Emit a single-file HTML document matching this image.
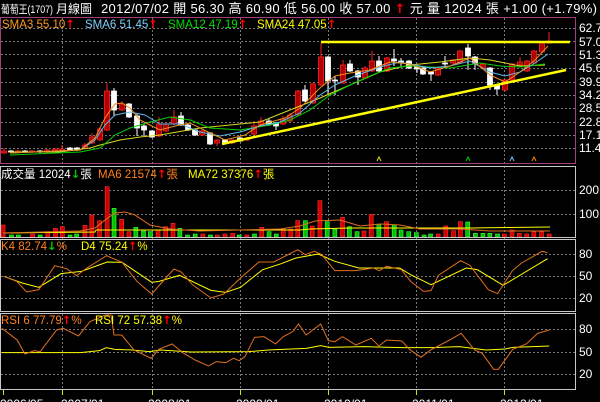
<!DOCTYPE html>
<html><head><meta charset="utf-8"><style>
html,body{margin:0;padding:0;background:#000;width:600px;height:402px;overflow:hidden}
svg{display:block}
text{font-family:"Liberation Sans","Noto Sans CJK TC",sans-serif}
.a{font-family:"DejaVu Sans",sans-serif;font-weight:bold}
</style></head><body>
<svg id="s" width="600" height="402" viewBox="0 0 600 402" xmlns="http://www.w3.org/2000/svg">
<rect width="600" height="402" fill="#000"/>
<g id="grid" stroke="#777" stroke-width="1" stroke-dasharray="2,2"></g>
<g id="draw"></g>
<rect x="0.5" y="17.5" width="575" height="146" fill="none" stroke="#a0407a" stroke-width="1"/>
<rect x="0.5" y="166.5" width="575" height="71" fill="none" stroke="#c8c8c8" stroke-width="1"/>
<rect x="0.5" y="239.5" width="575" height="72" fill="none" stroke="#c8c8c8" stroke-width="1"/>
<rect x="0.5" y="313.5" width="575" height="76" fill="none" stroke="#c8c8c8" stroke-width="1"/>
<text x="1" y="13" font-size="11" fill="#fff" textLength="52" lengthAdjust="spacingAndGlyphs">葡萄王(1707)</text>
<text x="56" y="13" font-size="12" fill="#fff">月線圖</text>
<text x="101" y="13" font-size="13" fill="#fff" textLength="496" lengthAdjust="spacing">2012/07/02 開 56.30 高 60.90 低 56.00 收 57.00 <tspan fill="#f00" class="a">↑</tspan> 元 量 12024 張 +1.00 (+1.79%)</text>
<g font-size="11.5">
<text x="2" y="28" fill="#ff9a1e">SMA3 55.10<tspan fill="#f00" class="a">↑</tspan></text>
<text x="85" y="28" fill="#7fd0ff">SMA6 51.45<tspan fill="#f00" class="a">↑</tspan></text>
<text x="168" y="28" fill="#00e000">SMA12 47.19<tspan fill="#f00" class="a">↑</tspan></text>
<text x="257" y="28" fill="#ffff00">SMA24 47.05<tspan fill="#f00" class="a">↑</tspan></text>
<text x="1" y="178" fill="#fff">成交量 12024<tspan fill="#0c0" class="a">↓</tspan>張</text>
<text x="98" y="178" fill="#ff8020">MA6 21574<tspan fill="#f00" class="a">↑</tspan>張</text>
<text x="188" y="178" fill="#ffff00">MA72 37376<tspan fill="#f00" class="a">↑</tspan>張</text>
<text x="1" y="250" fill="#ff8020">K4 82.74<tspan fill="#0c0" class="a">↓</tspan>%</text>
<text x="81" y="250" fill="#ffff00">D4 75.24<tspan fill="#f00" class="a">↑</tspan>%</text>
<text x="1" y="324" fill="#ff8020">RSI 6 77.79<tspan fill="#f00" class="a">↑</tspan>%</text>
<text x="95" y="324" fill="#ffff00">RSI 72 57.38<tspan fill="#f00" class="a">↑</tspan>%</text>
</g>
<g font-size="12" fill="#fff">
<text x="579" y="32">62.7</text><text x="579" y="46">57.0</text><text x="579" y="59">51.3</text>
<text x="579" y="72">45.6</text><text x="579" y="86">39.9</text><text x="579" y="99">34.2</text>
<text x="579" y="112">28.5</text><text x="579" y="126">22.8</text><text x="579" y="139">17.1</text>
<text x="579" y="152">11.4</text>
<text x="579" y="194">200K</text><text x="579" y="218">100K</text>
<text x="579" y="258">80</text><text x="579" y="280">50</text><text x="579" y="302">20</text>
<text x="579" y="333">80</text><text x="579" y="356">50</text><text x="579" y="378">20</text>
<text x="0" y="408">2006/05</text><text x="61" y="408">2007/01</text><text x="148" y="408">2008/01</text>
<text x="236" y="408">2009/01</text><text x="324" y="408">2010/01</text><text x="412" y="408">2011/01</text>
<text x="500" y="408">2012/01</text>
</g>
</svg>
<script>
var NS="http://www.w3.org/2000/svg";
function el(p,t,a){var e=document.createElementNS(NS,t);for(var k in a)e.setAttribute(k,a[k]);p.appendChild(e);return e;}
var G=document.getElementById('grid'),D=document.getElementById('draw');
[62,152,240,328,416,504].forEach(function(x){el(G,'line',{x1:x+.5,y1:18,x2:x+.5,y2:390});});
[28,41,54,68,82,95,108,122,135,148,190,214,254,276,298,329,352,374].forEach(function(y){el(G,'line',{x1:1,y1:y+.5,x2:575,y2:y+.5});});
[3,62,152,240,328,416,504].forEach(function(x){el(D,'line',{x1:x+.5,y1:390,x2:x+.5,y2:395,stroke:'#dd0',"stroke-width":1});});
function pl(pts,c,w){el(D,'polyline',{points:pts.map(function(p){return p[0]+','+p[1]}).join(' '),fill:'none',stroke:c,'stroke-width':w||1});}
var vb=[[8,195,'r'],[30,225,'g'],[48,225,'g'],[85,222,'r'],[105,225,'g'],[125,215,'r'],[145,205,'r'],[163,200,'r'],[183,225,'g'],[200,222,'g'],[222,196,'r'],[240,165,'r'],[260,182,'r'],[280,80,'r'],[298,145,'g'],[318,178,'r'],[337,215,'r'],[355,202,'g'],[375,213,'g'],[393,215,'g'],[413,210,'r'],[433,200,'r'],[452,190,'r'],[470,205,'g'],[490,225,'g'],[510,222,'g'],[530,222,'r'],[550,225,'g'],[568,225,'r'],[588,222,'r'],[608,220,'r'],[625,225,'g'],[645,225,'r'],[665,222,'g'],[684,202,'r'],[703,215,'g'],[722,222,'g'],[740,207,'r'],[760,207,'r'],[778,182,'r'],[798,182,'g'],[816,198,'r'],[836,122,'r'],[855,185,'g'],[875,208,'g'],[895,172,'r'],[913,200,'g'],[933,215,'g'],[951,213,'r'],[970,163,'r'],[990,193,'g'],[1010,185,'r'],[1030,195,'g'],[1048,210,'g'],[1068,215,'g'],[1088,218,'g'],[1108,225,'g'],[1125,222,'g'],[1145,222,'r'],[1165,198,'r'],[1185,212,'r'],[1203,185,'r'],[1222,186,'g'],[1242,220,'g'],[1262,220,'g'],[1280,220,'g'],[1300,222,'g'],[1318,222,'r'],[1338,210,'r'],[1357,220,'r'],[1376,222,'r'],[1395,215,'r'],[1415,215,'r'],[1435,222,'r']];
vb.forEach(function(b){var x=b[0]/2.613,y=160+b[1]/3;el(D,'rect',{x:x-2,y:y,width:4,height:237-y,fill:b[2]=='r'?'#d00000':'#00c000',stroke:b[2]=='r'?'#ff3030':'#40ff40','stroke-width':.6});});
pl([[3,233],[95,232],[96,230],[300,230],[310,229],[350,228],[355,228],[470,228],[550,227]],'#ffff00',1);
pl([[3,233],[80,231],[95,228],[105,220],[115,213],[125,212],[135,215],[150,225],[170,229],[200,231],[240,230],[280,229],[300,226],[315,221],[340,220],[360,226],[380,224],[400,225],[420,229],[460,229],[490,231],[520,231],[550,231]],'#e07020',1);
var cd=[[4,151,153,148,154,'r'],[11,151,152,150,153,'w'],[18,151,152,150,153,'r'],[25,151,152,150,153,'w'],[32,151,152,150,153,'r'],[40,151,152,150,153,'w'],[47,150,152,149,153,'r'],[55,149,151,148,152,'r'],[62,149,151,145,152,'r'],[70,148,150,147,151,'w'],[77,148,150,147,151,'w'],[85,145,148,143,149,'r'],[92,137,143,133,144,'r'],[100,129,140,127,141,'r'],[107,91,130,83,131,'r'],[114,91,110,88,116,'w'],[122,104,110,101,111,'r'],[129,104,117,103,118,'w'],[137,116,128,114,136,'w'],[144,126,130,124,136,'w'],[152,131,137,130,138,'w'],[159,124,136,117,137,'r'],[166,124,131,122,132,'r'],[174,117,124,110,125,'r'],[181,116,125,112,126,'w'],[188,125,130,124,131,'w'],[195,130,135,129,136,'w'],[202,131,135,130,136,'r'],[210,133,144,132,145,'w'],[217,140,143,139,146,'r'],[225,140,143,139,144,'w'],[232,140,143,139,144,'r'],[240,138,141,137,142,'w'],[247,138,140,137,141,'r'],[254,126,134,121,135,'r'],[261,121,125,117,126,'r'],[269,121,124,119,126,'w'],[276,123,126,122,130,'w'],[283,119,124,116,125,'r'],[290,115,121,113,122,'r'],[298,91,115,90,116,'r'],[305,90,101,85,102,'w'],[313,84,103,83,104,'r'],[321,57,85,43,86,'r'],[328,57,81,56,95,'w'],[335,80,81,76,95,'w'],[343,65,83,60,84,'r'],[350,64,71,60,72,'w'],[358,71,77,70,85,'w'],[365,68,78,66,79,'r'],[372,61,71,51,72,'r'],[379,61,71,56,72,'w'],[387,58,71,57,72,'r'],[394,59,61,49,66,'w'],[401,61,63,58,67,'w'],[409,61,68,60,69,'w'],[417,67,69,66,73,'w'],[423,68,74,67,75,'w'],[431,72,74,71,81,'w'],[438,68,75,67,76,'r'],[445,63,64,56,68,'w'],[453,60,63,59,64,'r'],[460,51,63,50,64,'r'],[468,48,56,44,70,'w'],[475,57,63,56,70,'w'],[483,64,68,63,69,'r'],[490,68,85,67,90,'w'],[497,85,89,84,95,'w'],[505,80,90,79,91,'r'],[512,64,80,63,81,'r'],[520,62,65,57,66,'r'],[527,61,71,60,72,'r'],[534,51,63,50,64,'r'],[542,43,52,42,53,'r'],[549,41,43,32,44,'r']];
cd.forEach(function(c){var col=c[5]=='r'?'#ff2020':'#ffffff';el(D,'line',{x1:c[0],y1:c[3],x2:c[0],y2:c[4],stroke:col,'stroke-width':1});el(D,'rect',{x:c[0]-2.5,y:c[1],width:5,height:Math.max(1,c[2]-c[1]),fill:c[5]=='r'?'#b00000':'#fff',stroke:col,'stroke-width':.8});});
pl([[10,152],[60,152],[90,148],[100,145],[120,140],[140,137],[160,135],[200,128],[240,124],[260,122],[290,110],[320,98],[350,85],[380,72],[410,65],[440,62],[470,58],[490,60],[520,66],[545,65]],'#d8d820',1);
pl([[10,155],[80,152],[100,148],[115,135],[130,128],[150,122],[170,117],[190,120],[210,128],[240,130],[270,125],[290,120],[310,110],[330,95],[350,85],[370,76],[390,68],[410,66],[450,68],[480,63],[500,66],[520,67],[545,64]],'#00d000',1);
pl([[10,153],[80,150],[95,140],[105,125],[115,115],[130,112],[145,115],[160,124],[180,124],[200,132],[220,136],[240,132],[260,126],[280,122],[300,113],[320,95],[335,85],[355,76],[380,67],[400,62],[430,68],[450,66],[470,61],[490,72],[505,76],[520,72],[535,63],[548,54]],'#60b8e8',1);
pl([[10,153],[80,150],[95,138],[105,118],[115,104],[122,103],[130,108],[140,120],[150,125],[160,130],[175,126],[190,123],[210,133],[225,140],[245,135],[260,125],[285,118],[300,108],[320,88],[335,76],[350,73],[370,70],[390,62],[410,64],[430,72],[450,66],[470,58],[490,75],[505,82],[520,72],[535,60],[548,46]],'#f09020',1);
el(D,'line',{x1:321,y1:42,x2:570,y2:42,stroke:'#ffff00','stroke-width':2.5});
el(D,'line',{x1:222,y1:144,x2:566,y2:70,stroke:'#ffff00','stroke-width':2.5});
[[379,'#dd0'],[468,'#0c0'],[512,'#6cf'],[534,'#f80']].forEach(function(t){pl([[t[0]-2,161],[t[0],157],[t[0]+2,161]],t[1],1);});
function kd(a,c){pl(a.map(function(p){return [p[0]/2.703,238+p[1]/3]}),c,1);}
kd([[10,115],[60,135],[105,148],[165,107],[220,100],[290,72],[330,73],[410,133],[430,130],[485,112],[570,157],[610,163],[650,148],[710,95],[760,77],[800,60],[860,48],[905,70],[970,90],[1080,90],[1110,110],[1165,140],[1260,90],[1290,95],[1360,142],[1480,62]],'#ffff00');
kd([[10,115],[45,130],[72,162],[105,155],[148,83],[180,92],[207,113],[235,90],[288,53],[330,73],[370,130],[410,168],[470,93],[490,102],[520,140],[570,180],[605,168],[650,120],[700,72],[740,72],[805,35],[825,50],[850,40],[870,50],[905,98],[960,98],[1010,90],[1025,98],[1045,85],[1085,95],[1110,130],[1145,160],[1165,158],[1185,112],[1245,68],[1270,82],[1320,155],[1345,167],[1385,98],[1410,75],[1465,40],[1480,44]],'#e07020');
function rs(a,c){pl(a.map(function(p){return [p[0]/2.613,300+p[1]/3]}),c,1);}
rs([[5,158],[210,158],[260,152],[278,143],[300,148],[345,150],[390,155],[420,150],[500,156],[650,155],[700,150],[800,145],[838,137],[860,142],[950,140],[1050,143],[1130,143],[1200,140],[1270,150],[1320,147],[1340,142],[1435,138]],'#ffff00');
rs([[5,85],[45,120],[65,162],[90,152],[105,155],[148,90],[165,85],[205,108],[235,65],[275,45],[290,45],[298,105],[318,105],[350,150],[395,175],[415,148],[450,132],[480,160],[510,180],[545,198],[565,185],[590,188],[610,175],[625,182],[640,170],[665,112],[690,110],[720,132],[740,110],[765,95],[780,72],[800,105],[838,72],[858,122],[875,125],[895,110],[930,135],[970,115],[990,138],[1010,120],[1050,123],[1070,148],[1100,172],[1125,150],[1175,120],[1205,100],[1240,150],[1260,160],[1290,208],[1302,208],[1340,148],[1375,132],[1405,100],[1435,90]],'#e07020');
</script>
</body></html>
